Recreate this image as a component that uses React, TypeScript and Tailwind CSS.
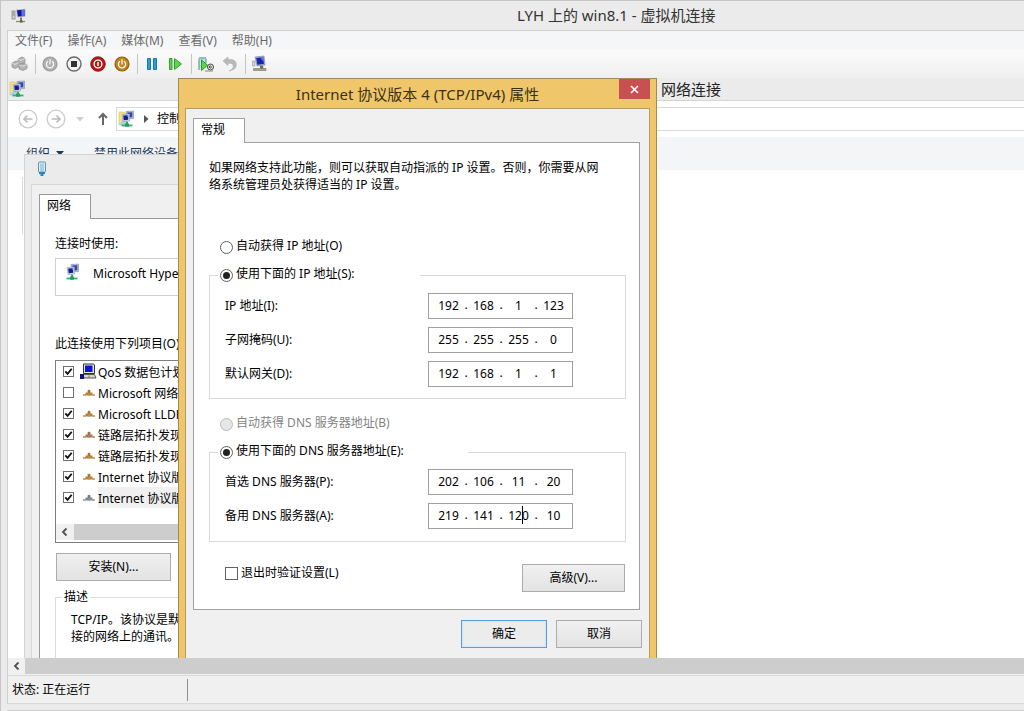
import React from "react";

function ServerIcon() {
  return (
    <svg width="16" height="16" viewBox="0 0 16 16" aria-hidden="true">
      <rect x="1" y="3" width="3" height="8" fill="#d8d8d8" stroke="#777" strokeWidth=".7" />
      <path d="M1.6 5h1.8M1.6 7h1.8" stroke="#555" strokeWidth=".7" />
      <path d="M5 1.5l9.500-.7v8L6 9.500z" fill="#b9bcc8" />
      <path d="M6 2.300l7.500-.6v6.200L6.800 8.500z" fill="#1414a8" />
      <path d="M10.500 2v6l3-.2V1.700z" fill="#5c74e0" />
      <path d="M10 9.500v4" stroke="#555" strokeWidth="1.500" />
      <path d="M5 13.500h9" stroke="#8a8a6a" strokeWidth="1.300" />
      <rect x="9" y="12.500" width="2.500" height="2" fill="#55554a" />
    </svg>
  );
}

function NetworkIcon({ folder = false }: { folder?: boolean }) {
  return (
    <svg width="18" height="18" viewBox="0 0 18 18" aria-hidden="true">
      {folder && (
        <>
          <path d="M1 2h5l2 2v11H1z" fill="#f6df84" stroke="#dcbf55" strokeWidth=".6" />
          <path d="M1 14c3-1 3-5 6-6v7H1z" fill="#9ed3ee" />
        </>
      )}
      <path d="M8 1.500l7.500-.5v7.500L9 9z" fill="#b7c4de" stroke="#7788a8" strokeWidth=".6" />
      <path d="M9.300 2.500l5-.3v5l-4.500.4z" fill="#3346a8" />
      <path d="M4 4.500l7.500-.5v7L5 11.500z" fill="#d6deee" stroke="#8796b4" strokeWidth=".6" />
      <path d="M5.200 5.500l5-.3v4.600l-4.500.4z" fill="#171a90" />
      <path d="M8.500 5.300l1.700-.1v2.600z" fill="#6c8ae8" />
      <path d="M9 11.500v3" stroke="#3aa86c" strokeWidth="2" />
      <path d="M3.500 15.500h11" stroke="#34b074" strokeWidth="1.800" />
      <rect x="7" y="13.500" width="4" height="3.200" fill="#2a9a5e" />
    </svg>
  );
}

function KeysIcon() {
  return (
    <svg width="18" height="16" viewBox="0 0 18 16" aria-hidden="true">
      <g fill="#b4b4b4" stroke="#8c8c8c" strokeWidth=".7">
        <path d="M7 3l4-2 3 1.500v4l-4 2-3-1.500z" />
        <path d="M1 7l4-2 3 1.500v4l-4 2-3-1.500z" />
        <path d="M8 9l4-2 4 1.500v4l-4 2-4-1.500z" />
      </g>
      <path d="M7 3l3 1.500 4-2M1 7l3 1.500 4-2M8 9l4 1.500 4-2" stroke="#e8e8e8" fill="none" strokeWidth=".8" />
    </svg>
  );
}

function PowerIcon({ fill, ring }: { fill: string; ring: string }) {
  return (
    <svg width="16" height="16" viewBox="0 0 16 16" aria-hidden="true">
      <circle cx="8" cy="8" r="7" fill={fill} stroke={ring} strokeWidth="1.200" />
      <path d="M5.600 5.500a3.600 3.600 0 1 0 4.800 0M8 3.700v4.300" stroke="#f4f4f4" strokeWidth="1.300" fill="none" strokeLinecap="round" />
    </svg>
  );
}

function StopIcon() {
  return (
    <svg width="16" height="16" viewBox="0 0 16 16" aria-hidden="true">
      <circle cx="8" cy="8" r="7" fill="#f4f4f4" stroke="#6a6a6a" strokeWidth="1.400" />
      <rect x="5" y="5" width="6" height="6" fill="#333" />
    </svg>
  );
}

function ShutdownIcon() {
  return (
    <svg width="16" height="16" viewBox="0 0 16 16" aria-hidden="true">
      <circle cx="8" cy="8" r="7.300" fill="#b51616" stroke="#7e1010" strokeWidth=".8" />
      <circle cx="8" cy="8" r="3.900" fill="#b51616" stroke="#fff" strokeWidth="1.400" />
      <path d="M8 6v4" stroke="#fff" strokeWidth="1.500" />
    </svg>
  );
}

function PauseIcon() {
  return (
    <svg width="12" height="16" viewBox="0 0 12 16" aria-hidden="true">
      <path d="M1.500 2.500h3v11h-3zM7.500 2.500h3v11h-3z" fill="#2a9fd0" stroke="#1878a8" />
    </svg>
  );
}

function ResumeIcon() {
  return (
    <svg width="16" height="16" viewBox="0 0 16 16" aria-hidden="true">
      <path d="M1.500 2.500h2.500v11H1.500zM6.500 2.500l7 5.500-7 5.500z" fill="#63d052" stroke="#2fa32a" />
    </svg>
  );
}

function SnapshotIcon() {
  return (
    <svg width="18" height="18" viewBox="0 0 18 18" aria-hidden="true">
      <path d="M2 15V3.500h7V8" fill="#cfe8e6" stroke="#3a8f8a" />
      <rect x="2" y="2" width="7" height="2.500" fill="#8cc3c0" />
      <path d="M4.500 5l6 5.200-6 5.300z" fill="#5fd64b" stroke="#259a23" />
      <circle cx="13.500" cy="12" r="3" fill="#e8e8e8" stroke="#444" />
      <path d="M12 12h3M13.500 10.500l-1.500 1.500 1.500 1.500" stroke="#444" fill="none" />
      <path d="M8 16h8" stroke="#8a8a6a" />
    </svg>
  );
}

function UndoIcon() {
  return (
    <svg width="16" height="16" viewBox="0 0 16 16" aria-hidden="true">
      <path d="M1 5l5-4v2.600h2.500c3.600 0 5.800 2 5.800 5 0 3.600-2.600 5.600-7.300 6.200 3-1 4.300-2.600 4.300-4.800 0-1.900-1.300-2.700-3.300-2.700H6V9.500z" fill="#b9b9b9" stroke="#a4a4a4" strokeWidth=".5" />
    </svg>
  );
}

function MonitorIcon() {
  return (
    <svg width="18" height="18" viewBox="0 0 18 18" aria-hidden="true">
      <path d="M1.500 6h2.500v5H1.500z" fill="#cfcfcf" stroke="#999" strokeWidth=".6" />
      <path d="M4 2l9-1 1 9-8 1z" fill="#a9b6d6" stroke="#6d7ca2" strokeWidth=".6" />
      <path d="M5.200 3l7-.8.700 6.800-6.500.8z" fill="#1a25a8" />
      <path d="M9 2.600l3.200-.4.500 4.600z" fill="#5c80e8" />
      <path d="M9 11l3-.3.500 3H9z" fill="#6a6a5e" />
      <path d="M2.500 13.500h12.500v2H2.500z" fill="#a8a48c" stroke="#77735c" strokeWidth=".6" />
    </svg>
  );
}

function CableIcon() {
  return (
    <svg width="10" height="16" viewBox="0 0 10 16" aria-hidden="true">
      <rect x="1.500" y="1" width="7" height="10" rx="1" fill="#dfeef6" stroke="#5e93b4" />
      <path d="M4 2.500v7.500M6 2.500v7.500" stroke="#6ea6c4" strokeWidth=".9" />
      <path d="M2 11h6v2H6.500v2h-3v-2H2z" fill="#2a84b8" />
    </svg>
  );
}

function QosIcon() {
  return (
    <svg width="17" height="17" viewBox="0 0 17 17" aria-hidden="true">
      <path d="M3.500 1h10l1 1v8.500h-11z" fill="#e4e4e4" stroke="#333" />
      <rect x="5" y="2.500" width="7.500" height="6.500" fill="#0a12d8" />
      <path d="M3 11.500h11.500l1.500 3.500H4z" fill="#d8d8c8" stroke="#333" strokeWidth=".8" />
      <path d="M0 11h4v5H0z" fill="#101080" />
      <path d="M9 12.500v2.500" stroke="#777" />
    </svg>
  );
}

function ProtocolIcon({ color }: { color: string }) {
  return (
    <svg width="14" height="9" viewBox="0 0 14 9" aria-hidden="true">
      <path d="M1 7h12" stroke="#a99a80" strokeWidth="1" />
      <path d="M1 7h12" stroke={color} strokeWidth="1" strokeDasharray="3 1.500" />
      <path d="M7 1.500l1.500 1v2h2V7h-7V4.500h2v-2z" fill={color} />
      <path d="M7 2v3M4.500 6h1M8.500 6h1" stroke="#6d6252" strokeWidth=".8" />
    </svg>
  );
}

function NavArrow({ flip = false }: { flip?: boolean }) {
  return (
    <svg width="20" height="20" viewBox="0 0 20 20" aria-hidden="true">
      <circle cx="10" cy="10" r="8.800" fill="none" stroke="#cbcbcb" strokeWidth="1.300" />
      <path
        d={flip ? "M5.500 10h8.500M10.500 6.500l3.500 3.500-3.500 3.500" : "M14.500 10H6M9.500 6.500L6 10l3.500 3.500"}
        fill="none"
        stroke="#bcbcbc"
        strokeWidth="1.700"
      />
    </svg>
  );
}

function ScrollLeftIcon() {
  return (
    <svg width="8" height="10" viewBox="0 0 8 10" aria-hidden="true">
      <path d="M5.500 1.500L2 5l3.500 3.500" fill="none" stroke="#505050" strokeWidth="1.800" />
    </svg>
  );
}

function Radio({ label, name, ...rest }: { label: string; name: string; defaultChecked?: boolean; disabled?: boolean }) {
  return (
    <label className="flex h-4 items-center gap-[3px] has-disabled:text-[#838383]">
      <span className="grid">
        <input
          type="radio"
          name={name}
          className="peer col-start-1 row-start-1 h-[13px] w-[13px] appearance-none rounded-full border border-[#606060] bg-white disabled:border-[#bcbcbc] disabled:bg-[#e6e6e6]"
          {...rest}
        />
        <span className="pointer-events-none col-start-1 row-start-1 hidden h-[7px] w-[7px] place-self-center rounded-full bg-[#222] peer-checked:block" />
      </span>
      <span className="pb-0.5">{label}</span>
    </label>
  );
}

function IpField({ label, parts, caret }: { label: string; parts: string[]; caret?: boolean }) {
  return (
    <div className="flex items-center justify-between">
      <span>{label}</span>
      <div role="group" aria-label={label} className="flex h-[26px] w-[145px] items-center border border-[#a0a0a0] bg-white pb-0.5 pl-1.5">
        {parts.map((p, i) => (
          <React.Fragment key={i}>
            <span className="relative">
              <input
                aria-label={`${label} ${i + 1}`}
                defaultValue={p}
                className="block h-5 w-[27px] bg-transparent text-center outline-none"
              />
              {caret && i === 2 && <span className="absolute top-px left-[17px] h-[18px] w-px bg-black" />}
            </span>
            {i < 3 && <span className="w-2 text-center">.</span>}
          </React.Fragment>
        ))}
      </div>
    </div>
  );
}

const buttonClass = "h-7 border border-[#acacac] bg-linear-to-b from-[#f0f0f0] to-[#e3e3e3] text-center";

const menus = ["文件(F)", "操作(A)", "媒体(M)", "查看(V)", "帮助(H)"];

const components = [
  { name: "QoS 数据包计划", on: true, kind: "qos" },
  { name: "Microsoft 网络", on: false, kind: "#c28a35" },
  { name: "Microsoft LLDP", on: true, kind: "#c28a35" },
  { name: "链路层拓扑发现", on: true, kind: "#b97a55" },
  { name: "链路层拓扑发现", on: true, kind: "#c28a35" },
  { name: "Internet 协议版本", on: true, kind: "#c28a35" },
  { name: "Internet 协议版本", on: true, kind: "#7f93a8", selected: true },
];

function ToolButton({ label, children }: { label: string; children: React.ReactNode }) {
  return (
    <button aria-label={label} className="flex w-6 shrink-0 items-center justify-center">
      {children}
    </button>
  );
}

function Separator() {
  return <span className="mr-0.5 ml-[3px] h-5 w-px bg-[#c4c4c4]" />;
}

function HostToolbar() {
  return (
    <div className="flex h-7 items-center bg-linear-to-b from-[#fbfbfb] to-[#efefef]">
      <ToolButton label="Ctrl+Alt+Delete"><KeysIcon /></ToolButton>
      <Separator />
      <ToolButton label="启动"><PowerIcon fill="#b0b0b0" ring="#9a9a9a" /></ToolButton>
      <ToolButton label="强行关闭"><StopIcon /></ToolButton>
      <ToolButton label="关闭"><ShutdownIcon /></ToolButton>
      <ToolButton label="保存"><PowerIcon fill="#c0851a" ring="#8c5c10" /></ToolButton>
      <Separator />
      <ToolButton label="暂停"><PauseIcon /></ToolButton>
      <ToolButton label="重置"><ResumeIcon /></ToolButton>
      <Separator />
      <ToolButton label="检查点"><SnapshotIcon /></ToolButton>
      <ToolButton label="还原"><UndoIcon /></ToolButton>
      <Separator />
      <ToolButton label="增强会话"><MonitorIcon /></ToolButton>
    </div>
  );
}

function ConnectionsWindow() {
  return (
    <section className="flex h-full flex-col bg-white">
      <header className="flex h-[23px] items-center border-b border-[#d4d4d4] bg-[#ebebeb] pl-px text-[15px]">
        <NetworkIcon folder />
        <h2 className="pl-[634px] text-[#222]">网络连接</h2>
      </header>
      <div className="flex h-9 items-center">
        <button aria-label="后退" className="ml-2.5"><NavArrow /></button>
        <button aria-label="前进" className="ml-2"><NavArrow flip /></button>
        <svg className="ml-2.5" width="8" height="5" viewBox="0 0 8 5" aria-hidden="true"><path d="M0 0h8L4 4.500z" fill="#cfcfcf" /></svg>
        <button aria-label="向上" className="ml-3">
          <svg width="14" height="14" viewBox="0 0 14 14" aria-hidden="true"><path d="M7 13V2M3 6l4-4 4 4" fill="none" stroke="#666" strokeWidth="2" /></svg>
        </button>
        <div className="ml-1.5 flex h-6 flex-1 items-center border border-r-0 border-[#d9d9d9] pl-px">
          <NetworkIcon folder />
          <svg className="ml-2" width="5" height="8" viewBox="0 0 5 8" aria-hidden="true"><path d="M0 0l4.500 4L0 8z" fill="#555" /></svg>
          <span className="ml-2">控制</span>
        </div>
      </div>
      <div className="flex h-[33px] items-center bg-[#f4f5f7] pl-[18px] text-[#1e395b]">
        <button className="flex items-center gap-1.5">
          组织
          <svg width="8" height="5" viewBox="0 0 8 5" aria-hidden="true"><path d="M0 0h8L4 4.500z" fill="#1e395b" /></svg>
        </button>
        <button className="ml-[30px]">禁用此网络设备</button>
      </div>
      <div className="p-[7px] pl-3.5">
        <div className="h-[57px] w-40 border-l border-[#dadada]" />
      </div>
    </section>
  );
}

function AdapterProperties() {
  return (
    <section className="absolute top-[76px] left-4 h-[560px] w-[380px] border border-[#d2d2d2] bg-[#ebebeb] px-1.5 whitespace-nowrap">
      <header className="flex h-[29px] items-center pb-0.5 pl-1.5">
        <CableIcon />
      </header>
      <div className="h-[523px] border border-[#d6d6d6] bg-[#f0f0f0] px-[7px] pt-[9px]">
        <button role="tab" aria-selected="true" className="relative z-10 -mb-px flex h-[25px] w-[52px] items-center border border-b-0 border-[#999] bg-white pb-0.5 pl-[7px]">
          网络
        </button>
        <div className="h-[476px] border border-[#999] bg-white px-[15px] pt-[17px]">
          <p className="h-[22px] leading-4">连接时使用:</p>
          <div className="flex h-[38px] items-start border border-[#cfcfcf] pt-1 pl-[7px]">
            <NetworkIcon />
            <span className="pt-[3px] pl-3 leading-4">Microsoft Hyper</span>
          </div>
          <p className="mt-10 h-6 leading-4">此连接使用下列项目(O)</p>
          <div className="flex h-[183px] flex-col border border-[#7f7f7f]">
            <ul className="flex-1">
              {components.map((c, i) => (
                <li key={i}>
                  <label className="flex h-[21px] items-center pl-[7px]">
                    <span className="grid shrink-0">
                      <input
                        type="checkbox"
                        defaultChecked={c.on}
                        className="peer col-start-1 row-start-1 h-[11px] w-[11px] appearance-none border border-[#707070] bg-white"
                      />
                      <svg className="pointer-events-none col-start-1 row-start-1 hidden peer-checked:block" width="11" height="11" viewBox="0 0 12 12" aria-hidden="true">
                        <path d="M2.500 5.800l2.500 2.700 4.500-5.500" fill="none" stroke="#111" strokeWidth="2" />
                      </svg>
                    </span>
                    <span className="ml-[5px] flex w-[19px] shrink-0 justify-center">
                      {c.kind === "qos" ? <QosIcon /> : <ProtocolIcon color={c.kind} />}
                    </span>
                    <span className={`flex h-full items-center pt-0.5 ${c.selected ? "bg-[#f0f0f0]" : ""}`}>{c.name}</span>
                  </label>
                </li>
              ))}
            </ul>
            <div className="mb-0.5 flex h-4 bg-[#f0f0f0]">
              <button aria-label="向左滚动" className="flex w-[18px] items-center justify-center"><ScrollLeftIcon /></button>
              <div className="flex-1 bg-[#cdcdcd]" />
            </div>
          </div>
          <button className={`mt-2.5 ml-px w-[115px] ${buttonClass}`}>安装(N)...</button>
          <fieldset className="mt-2 h-24 border border-[#dcdcdc] px-[15px] pt-1.5 leading-[17px]">
            <legend className="-ml-[9px] px-0.5 leading-4">描述</legend>
            <p>TCP/IP。该协议是默</p>
            <p>接的网络上的通讯。</p>
          </fieldset>
        </div>
      </div>
    </section>
  );
}

function Ipv4Dialog() {
  return (
    <section role="dialog" aria-label="Internet 协议版本 4 (TCP/IPv4) 属性" className="absolute top-0 left-[170px] w-[479px] border border-[#a08a55] bg-[#efc76a] px-1.5 pb-1.5">
      <header className="grid h-[29px] grid-cols-[1fr_auto]">
        <h1 className="col-span-2 col-start-1 row-start-1 self-center text-center text-[15px] text-[#3d3015]">
          Internet 协议版本 4 (TCP/IPv4) 属性
        </h1>
        <button aria-label="关闭" className="col-start-2 row-start-1 flex h-5 w-[31px] items-center justify-center bg-[#c75050]">
          <svg width="9" height="9" viewBox="0 0 9 9" aria-hidden="true"><path d="M1 1l7 7M8 1L1 8" stroke="#fff" strokeWidth="1.700" /></svg>
        </button>
      </header>
      <div className="border border-[#b39d66] bg-[#f0f0f0] px-[7px] pt-[9px] pb-3">
        <button role="tab" aria-selected="true" className="relative z-10 -mb-px flex h-[25px] w-[52px] items-center border border-b-0 border-[#a0a0a0] bg-white pb-0.5 pl-[7px]">
          常规
        </button>
        <div className="mr-0.5 border border-[#a0a0a0] bg-white pt-4 pr-[13px] pb-[17px] pl-[15px]">
          <p className="leading-[17px]">
            如果网络支持此功能，则可以获取自动指派的 IP 设置。否则，你需要从网
            <br />
            络系统管理员处获得适当的 IP 设置。
          </p>
          <div className="mt-[46px] ml-[11px]">
            <Radio name="ip" label="自动获得 IP 地址(O)" />
          </div>
          <fieldset className="mt-3 border border-[#d9d9d9] pt-2.5 pr-[52px] pb-[11px] pl-[15px]">
            <legend className="-ml-[7px] w-[202px] pl-0.5">
              <Radio name="ip" label="使用下面的 IP 地址(S):" defaultChecked />
            </legend>
            <div className="flex flex-col gap-2">
              <IpField label="IP 地址(I):" parts={["192", "168", "1", "123"]} />
              <IpField label="子网掩码(U):" parts={["255", "255", "255", "0"]} />
              <IpField label="默认网关(D):" parts={["192", "168", "1", "1"]} />
            </div>
          </fieldset>
          <div className="mt-[17px] ml-[11px]">
            <Radio name="dns" label="自动获得 DNS 服务器地址(B)" disabled />
          </div>
          <fieldset className="mt-3 border border-[#d9d9d9] pt-[9px] pr-[52px] pb-3 pl-[15px]">
            <legend className="-ml-[7px] w-[250px] pl-0.5">
              <Radio name="dns" label="使用下面的 DNS 服务器地址(E):" defaultChecked />
            </legend>
            <div className="flex flex-col gap-2">
              <IpField label="首选 DNS 服务器(P):" parts={["202", "106", "11", "20"]} />
              <IpField label="备用 DNS 服务器(A):" parts={["219", "141", "120", "10"]} caret />
            </div>
          </fieldset>
          <div className="mt-[22px] mr-px flex items-start justify-between pl-4">
            <label className="flex h-[18px] items-center gap-[3px]">
              <input type="checkbox" className="h-[13px] w-[13px] appearance-none border border-[#606060] bg-white" />
              退出时验证设置(L)
            </label>
            <button className={`w-[103px] ${buttonClass}`}>高级(V)...</button>
          </div>
        </div>
        <div className="mt-2.5 flex justify-end gap-[9px]">
          <button className="h-7 w-[86px] border border-[#5a9bd8] bg-[#ececec] shadow-[inset_0_0_2px_1px_#cfe6fa]">确定</button>
          <button className={`w-[86px] ${buttonClass}`}>取消</button>
        </div>
      </div>
    </section>
  );
}

export default function App() {
  return (
    <div className="flex h-screen flex-col overflow-hidden border-t border-l border-[#c6c6c6] bg-[#ebebeb] pl-1.5 font-['Noto_Sans','Noto_Sans_CJK_SC',sans-serif] text-xs text-black">
      <header className="flex h-[29px] shrink-0 items-center pl-1 text-[15px] text-[#333]">
        <ServerIcon />
        <h1 className="pb-0.5 pl-[490px]">LYH 上的 win8.1 - 虚拟机连接</h1>
      </header>
      <div className="flex min-h-0 flex-1 flex-col border-t border-l border-[#cfcfcf]">
        <nav className="flex h-[19px] shrink-0 items-center gap-[15px] bg-[#f5f6f7] pl-[7px] text-[#6a6a6a]">
          {menus.map((m) => (
            <button key={m}>{m}</button>
          ))}
        </nav>
        <HostToolbar />
        <main className="relative min-h-0 flex-1 overflow-hidden">
          <ConnectionsWindow />
          <AdapterProperties />
          <Ipv4Dialog />
        </main>
        <div className="flex h-[17px] shrink-0 border-b border-[#f0f0f0] bg-[#f0f0f0]">
          <button aria-label="向左滚动" className="flex w-[17px] items-center justify-center"><ScrollLeftIcon /></button>
          <div className="flex-1 bg-[#cdcdcd]" />
        </div>
        <footer className="flex h-[29px] shrink-0 items-center border-y border-[#d9d9d9] bg-[#f0f0f0] pl-1">
          <span className="flex h-[22px] w-44 items-center border-r border-[#909090]">状态: 正在运行</span>
        </footer>
      </div>
      <div className="h-[7px] shrink-0 border-b border-[#cfcfcf]" />
    </div>
  );
}
